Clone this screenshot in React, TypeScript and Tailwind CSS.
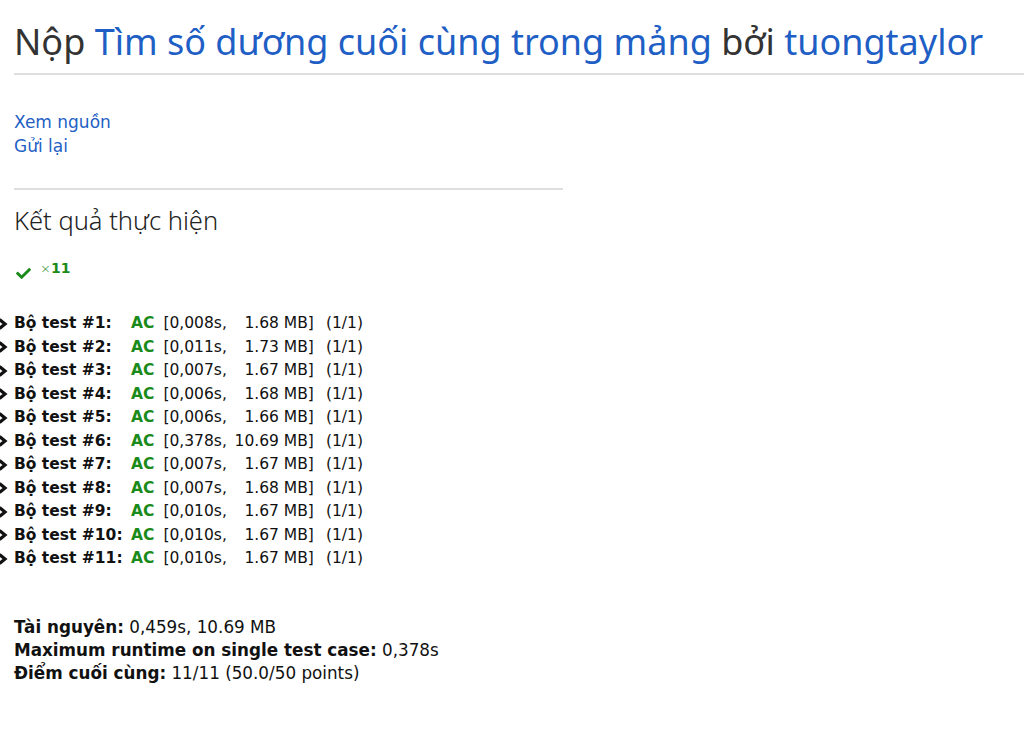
import { FaCheck } from "react-icons/fa";

const tests = [
  { time: "0,008s", mem: "1.68 MB" },
  { time: "0,011s", mem: "1.73 MB" },
  { time: "0,007s", mem: "1.67 MB" },
  { time: "0,006s", mem: "1.68 MB" },
  { time: "0,006s", mem: "1.66 MB" },
  { time: "0,378s", mem: "10.69 MB" },
  { time: "0,007s", mem: "1.67 MB" },
  { time: "0,007s", mem: "1.68 MB" },
  { time: "0,010s", mem: "1.67 MB" },
  { time: "0,010s", mem: "1.67 MB" },
  { time: "0,010s", mem: "1.67 MB" },
];

function Chevron() {
  return (
    <svg viewBox="0 0 11 12" className="w-[11px] h-[12px] ml-[-3px] mr-[6px] shrink-0">
      <polyline points="2.5,1.5 8,6 2.5,10.5" fill="none" stroke="#111" strokeWidth="3.2" strokeLinejoin="miter" />
    </svg>
  );
}

export default function App() {
  return (
    <div className="min-h-[751px] bg-white font-['DejaVu_Sans',sans-serif] text-[#111] overflow-hidden">
      <div className="pl-[14px]">
        {/* title */}
        <h2 className="pt-[19px] font-['Noto_Sans',sans-serif] text-[36px] leading-[46px] text-[#333] whitespace-nowrap">
          Nộp <a className="text-[#1f5fc5]">Tìm số dương cuối cùng trong mảng</a> bởi{" "}
          <a className="text-[#1f5fc5]">tuongtaylor</a>
        </h2>
        <hr className="mt-[8px] border-0 h-[2px] bg-[#dedede]" />

        <div className="mt-[35px] flex flex-col text-[17px] leading-[24px] text-[#1f5fc5]">
          <a>Xem nguồn</a>
          <a>Gửi lại</a>
        </div>

        <hr className="mt-[30px] w-[549px] border-0 h-[2px] bg-[#dedede]" />

        <h3 className="mt-[13px] font-['Noto_Sans',sans-serif] text-[25.5px] leading-[34px] font-light text-[#222]">
          Kết quả thực hiện
        </h3>

        <div className="mt-[23px] flex items-start gap-[7px] text-[#1a8a1a]">
          <FaCheck className="mt-[6px] w-[19px] h-[15px]" />
          <span className="text-[13px] leading-[16px]">
            <span className="font-light">×</span>
            <span className="font-bold text-[14px]">11</span>
          </span>
        </div>

        <div className="mt-[31px] -ml-[14px] flex flex-col text-[15.5px] leading-[23.5px]">
          {tests.map((t, i) => (
            <div key={i} className="flex items-center whitespace-pre">
              <Chevron />
              <span className="inline-block w-[117px] font-bold">Bộ test #{i + 1}:</span>
              <span className="font-bold text-[#1a8a1a]">AC</span>
              <span className="ml-[9px]">[{t.time},</span>
              <span className="inline-block w-[81px] text-right">{t.mem}</span>
              <span>]</span>
              <span className="ml-[12px]">(1/1)</span>
            </div>
          ))}
        </div>

        <div className="mt-[45px] flex flex-col text-[16.8px] leading-[23px]">
          <div>
            <b>Tài nguyên:</b> 0,459s, 10.69 MB
          </div>
          <div>
            <b>Maximum runtime on single test case:</b> 0,378s
          </div>
          <div>
            <b>Điểm cuối cùng:</b> 11/11 (50.0/50 points)
          </div>
        </div>
      </div>
    </div>
  );
}
